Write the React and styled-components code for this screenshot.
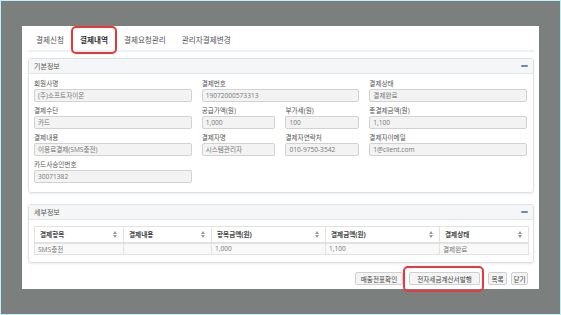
import React from "react";
import styled, { createGlobalStyle } from "styled-components";

const GlobalStyle = createGlobalStyle`
    html, body {
        margin: 0;
        padding: 0;
        background: #7b7f7e;
    }
    * {
        box-sizing: border-box;
    }
`

const FONT = `"Open Sans", "Noto Sans CJK KR", sans-serif`

const tabs = ['결제신청', '결제내역', '결제요청관리', '관리자결제변경']

// grid rows of the basic info section; half = shares the middle column
const rows = [
    [
        { label: '회원사명', value: '(주)소프트자이온' },
        { label: '결제번호', value: '19072000573313' },
        { label: '결제상태', value: '결제완료' },
    ],
    [
        { label: '결제수단', value: '카드' },
        { label: '공급가액(원)', value: '1,000', half: true },
        { label: '부가세(원)', value: '100', half: true },
        { label: '총결제금액(원)', value: '1,100' },
    ],
    [
        { label: '결제내용', value: '이용료결제(SMS충전)' },
        { label: '결제자명', value: '시스템관리자', half: true },
        { label: '결제자연락처', value: '010-9750-3542', half: true },
        { label: '결제자이메일', value: '1@client.com' },
    ],
    [
        { label: '카드사승인번호', value: '30071382' },
    ],
]

const columns = [
    { title: '결제항목', width: 89 },
    { title: '결제내용', width: 88 },
    { title: '항목금액(원)', width: 114 },
    { title: '결제금액(원)', width: 114 },
    { title: '결제상태', width: 89 },
]

const tableRow = ['SMS충전', '', '1,000', '1,100', '결제완료']

function Field({ label, value, half }) {
    return (
        <FieldBox half={half}>
            <Label>{label}</Label>
            <Input>{value}</Input>
        </FieldBox>
    )
}

function App() {
    return (
        <Frame>
            <GlobalStyle />
            <Panel>
                <TabBar>
                    {tabs.map((t, i) => (
                        <Tab key={t} active={i === 1}>
                            {t}
                            {i === 1 && <Highlight top={-9} right={-1} bottom={-9} left={-1} />}
                        </Tab>
                    ))}
                </TabBar>

                <Section>
                    <SectionHeader>
                        기본정보
                        <Minus />
                    </SectionHeader>
                    <InfoBody>
                        {rows.map((row, i) => (
                            <InfoRow key={i}>
                                {row.filter(f => !f.half).slice(0, 1).map(f => (
                                    <Field key={f.label} {...f} />
                                ))}
                                {row.some(f => f.half) ? (
                                    <HalfGroup>
                                        {row.filter(f => f.half).map(f => (
                                            <Field key={f.label} {...f} />
                                        ))}
                                    </HalfGroup>
                                ) : null}
                                {row.filter(f => !f.half).slice(1).map(f => (
                                    <Field key={f.label} {...f} />
                                ))}
                            </InfoRow>
                        ))}
                    </InfoBody>
                </Section>

                <Section gap={11}>
                    <SectionHeader>
                        세부정보
                        <Minus />
                    </SectionHeader>
                    <TableBody>
                        <Table>
                            <colgroup>
                                {columns.map(c => <col key={c.title} style={{ width: c.width }} />)}
                            </colgroup>
                            <thead>
                                <tr>
                                    {columns.map(c => (
                                        <Th key={c.title}>
                                            {c.title}
                                            <Sort />
                                        </Th>
                                    ))}
                                </tr>
                            </thead>
                            <tbody>
                                <tr>
                                    {tableRow.map((v, i) => <Td key={i}>{v}</Td>)}
                                </tr>
                            </tbody>
                        </Table>
                    </TableBody>
                </Section>

                <ButtonRow>
                    <Button w={48}>매출전표확인</Button>
                    <Button w={71} ml={6}>
                        전자세금계산서발행
                        <Highlight top={-7} right={-5} bottom={-8} left={-7} />
                    </Button>
                    <Button w={19} ml={8}>목록</Button>
                    <Button w={17} ml={4}>닫기</Button>
                </ButtonRow>
            </Panel>
        </Frame>
    )
}

export default App;

const Frame = styled.div`
    width: 561px;
    height: 315px;
    border: 1px solid #bff0f4;
    background: #7b7f7e;
    padding: 25px 0 0 21px;
    font-family: ${FONT};
`

const Panel = styled.div`
    width: 517px;
    height: 263px;
    background: #fff;
    padding: 0 5px 0 6px;
    display: flex;
    flex-direction: column;
`

const TabBar = styled.div`
    height: 26px;
    display: flex;
    align-items: flex-end;
    padding-bottom: 5px;
    border-bottom: 2px solid #f0f1f2;
`

const Tab = styled.div`
    position: relative;
    padding: 0 8px;
    font-size: 7.6px;
    line-height: 10px;
    color: ${({ active }) => active ? '#333' : '#555'};
    font-weight: ${({ active }) => active ? 600 : 400};
`

const Highlight = styled.span`
    position: absolute;
    top: ${({ top }) => top}px;
    right: ${({ right }) => right}px;
    bottom: ${({ bottom }) => bottom}px;
    left: ${({ left }) => left}px;
    border: 2px solid #e8383d;
    border-radius: 5px;
    pointer-events: none;
`

const Section = styled.div`
    margin-top: ${({ gap }) => gap || 6}px;
    border: 1px solid #dde1e5;
    border-radius: 3px;
    box-shadow: 0 1px 2px rgba(0, 0, 0, 0.08);
`

const SectionHeader = styled.div`
    height: 15px;
    padding: 0 5px;
    background: #f5f6f7;
    border-bottom: 1px solid #e2e5e8;
    display: flex;
    align-items: center;
    justify-content: space-between;
    font-size: 7px;
    color: #555;
`

const Minus = styled.span`
    width: 7px;
    height: 2px;
    border-radius: 1px;
    background: #6c88b4;
`

const InfoBody = styled.div`
    padding: 5px 6px 9px 5px;
    display: flex;
    flex-direction: column;
    gap: 4px;
`

const InfoRow = styled.div`
    display: grid;
    grid-template-columns: repeat(3, 1fr);
    column-gap: 10px;
`

const HalfGroup = styled.div`
    display: grid;
    grid-template-columns: 1fr 1fr;
    column-gap: 10px;
`

const FieldBox = styled.div`
    display: flex;
    flex-direction: column;
    gap: 1px;
    min-width: 0;
`

const Label = styled.div`
    height: 9px;
    font-size: 6.6px;
    line-height: 9px;
    color: #555;
    white-space: nowrap;
`

const Input = styled.div`
    height: 13px;
    padding: 0 3px;
    background: #f3f3f3;
    border: 1px solid #d2d2d2;
    border-radius: 2px;
    font-size: 6.6px;
    line-height: 11px;
    color: #777;
    white-space: nowrap;
    overflow: hidden;
`

const TableBody = styled.div`
    padding: 6px 5px 7px 5px;
`

const Table = styled.table`
    width: 494px;
    border-collapse: collapse;
    table-layout: fixed;
    font-family: ${FONT};
`

const Th = styled.th`
    position: relative;
    height: 16px;
    padding: 0 5px;
    border: 1px solid #e2e2e2;
    border-bottom: 2px solid #e2e2e2;
    text-align: left;
    font-size: 6.6px;
    font-weight: 700;
    color: #444;
`

// up/down sort arrows drawn as two css triangles at the right of the header cell
const Sort = styled.span`
    position: absolute;
    right: 6px;
    top: 50%;
    width: 4px;
    height: 7px;
    margin-top: -3.5px;

    &::before, &::after {
        content: '';
        position: absolute;
        left: 0;
        border-left: 2px solid transparent;
        border-right: 2px solid transparent;
    }
    &::before {
        top: 0;
        border-bottom: 3px solid #999;
    }
    &::after {
        bottom: 0;
        border-top: 3px solid #999;
    }
`

const Td = styled.td`
    height: 12px;
    padding: 0 3px;
    border: 1px solid #e2e2e2;
    background: #f9f9f9;
    font-size: 6.6px;
    color: #777;
`

const ButtonRow = styled.div`
    margin-top: 9px;
    padding-right: 6px;
    display: flex;
    justify-content: flex-end;
`

const Button = styled.div`
    position: relative;
    width: ${({ w }) => w}px;
    height: 13px;
    margin-left: ${({ ml }) => ml || 0}px;
    background: #f4f4f4;
    border: 1px solid #cfcfcf;
    border-radius: 2px;
    display: flex;
    align-items: center;
    justify-content: center;
    font-size: 6.6px;
    color: #444;
    white-space: nowrap;
`
